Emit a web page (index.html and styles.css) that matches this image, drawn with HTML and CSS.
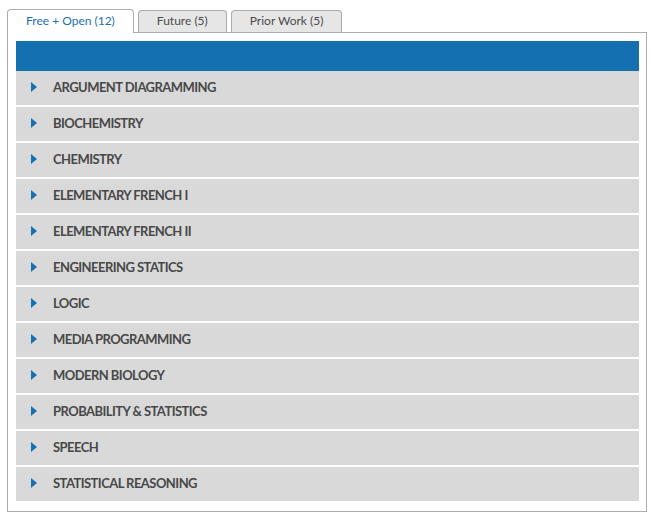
FILE: index.html
```html
<!DOCTYPE html>
<html lang="en">

<head>
    <meta charset="UTF-8">
    <meta name="viewport" content="width=device-width, initial-scale=1.0">
    <title>Courses</title>
    <link rel="stylesheet" href="styles.css">
</head>

<body>
    <div class="tabs">
        <ul class="tab-list">
            <li class="tab active">Free + Open (12)</li>
            <li class="tab">Future (5)</li>
            <li class="tab">Prior Work (5)</li>
        </ul>

        <div class="panel">
            <div class="panel-head"></div>
            <ul class="courses">
                <li class="course">ARGUMENT DIAGRAMMING</li>
                <li class="course">BIOCHEMISTRY</li>
                <li class="course">CHEMISTRY</li>
                <li class="course">ELEMENTARY FRENCH I</li>
                <li class="course">ELEMENTARY FRENCH II</li>
                <li class="course">ENGINEERING STATICS</li>
                <li class="course">LOGIC</li>
                <li class="course">MEDIA PROGRAMMING</li>
                <li class="course">MODERN BIOLOGY</li>
                <li class="course">PROBABILITY &amp; STATISTICS</li>
                <li class="course">SPEECH</li>
                <li class="course">STATISTICAL REASONING</li>
            </ul>
        </div>
    </div>
</body>

</html>
```

FILE: styles.css
```css
/**** DEFAULTS ****/

* {
    padding: 0;
    margin: 0;
    box-sizing: border-box;
}

body {
    background: #fff;
    font-family: Lato, sans-serif;
    color: #444;
}

ul {
    list-style: none;
}

/**** TABS ****/

.tabs {
    width: 640px;
    margin: 9px 0 0 7px;
}

.tab-list {
    display: flex;
    gap: 4px;
    align-items: flex-end;
    position: relative;
    z-index: 1;
}

.tab {
    height: 22px;
    padding: 0 18px;
    font-size: 12px;
    line-height: 20px;
    color: #4a4a4a;
    background-color: #e6e6e6;
    border: 1px solid #acacac;
    border-bottom: none;
    border-radius: 4px 4px 0 0;
}

.tab.active {
    height: 24px;
    line-height: 21px;
    color: #1b70b4;
    background-color: #fff;
    margin-bottom: -1px;
}

/**** PANEL ****/

.panel {
    border: 1px solid #acacac;
    padding: 8px 7px 10px 8px;
}

.panel-head {
    height: 30px;
    background-color: #1470b0;
}

.courses {
    display: flex;
    flex-direction: column;
    gap: 2px;
}

.course {
    height: 34px;
    display: flex;
    align-items: center;
    padding: 0 0 2px 37px;
    background-color: #d9d9d9;
    font-size: 13px;
    font-weight: 700;
    letter-spacing: -0.55px;
    color: #484848;
    position: relative;
}

/* little blue arrow */
.course::before {
    content: "";
    position: absolute;
    left: 15px;
    top: 11px;
    border-left: 6px solid #1470b0;
    border-top: 5.5px solid transparent;
    border-bottom: 5.5px solid transparent;
}
```
